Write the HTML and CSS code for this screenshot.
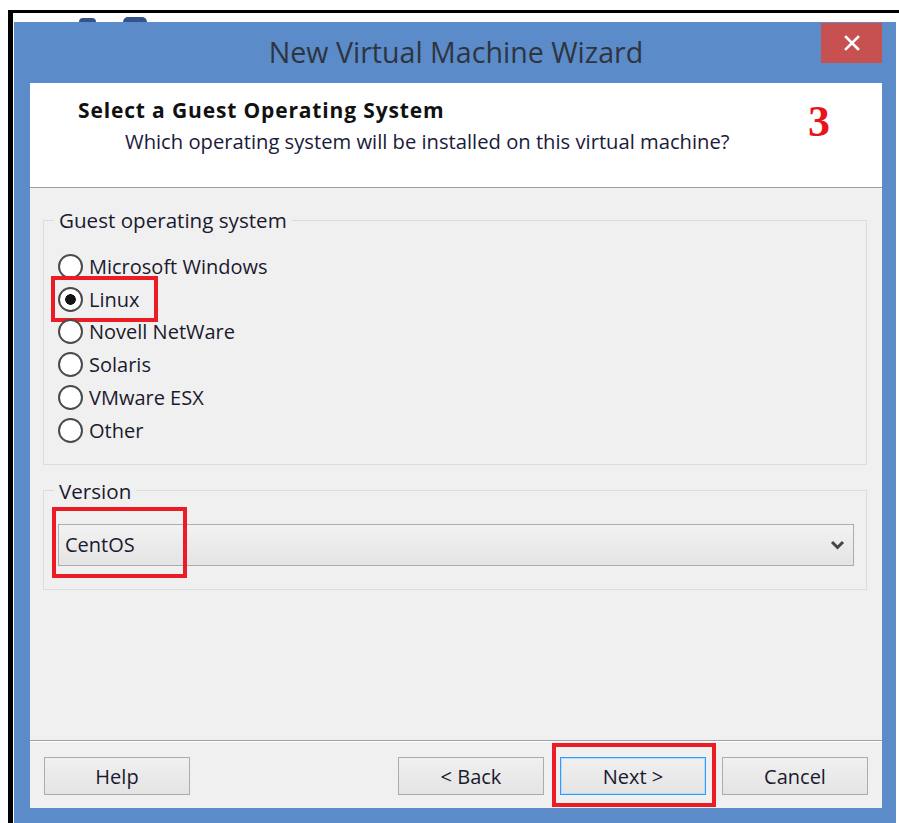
FILE: index.html
```html
<!DOCTYPE html>
<html lang="en">
<head>
<meta charset="utf-8">
<title>New Virtual Machine Wizard</title>
<link rel="stylesheet" href="styles.css">
</head>
<body>
<!-- bits of the desktop icons peeking above the dialog -->
<span class="peek peek-a"></span>
<span class="peek peek-b"></span>

<div class="frame">
  <div class="window">
    <div class="titlebar">
      <span class="title">New Virtual Machine Wizard</span>
      <button class="close" aria-label="Close">
        <svg width="16" height="16" viewBox="0 0 16 16"><path d="M2 2 L14 14 M14 2 L2 14" stroke="#fff" stroke-width="2.6" stroke-linecap="square"/></svg>
      </button>
    </div>

    <div class="client">
      <header class="head">
        <div class="head-text">
          <h1>Select a Guest Operating System</h1>
          <p>Which operating system will be installed on this virtual machine?</p>
        </div>
        <span class="step">3</span>
      </header>

      <main class="pane">
        <fieldset class="group group-os">
          <legend>Guest operating system</legend>
          <label class="radio"><span class="bullet"></span>Microsoft Windows</label>
          <label class="radio radio-on marked"><span class="bullet"></span>Linux</label>
          <label class="radio"><span class="bullet"></span>Novell NetWare</label>
          <label class="radio"><span class="bullet"></span>Solaris</label>
          <label class="radio"><span class="bullet"></span>VMware ESX</label>
          <label class="radio"><span class="bullet"></span>Other</label>
        </fieldset>

        <fieldset class="group group-version">
          <legend>Version</legend>
          <div class="select marked">
            <span class="select-value">CentOS</span>
            <svg class="chevron" width="15" height="12" viewBox="0 0 15 12"><path d="M2 3 L7.5 8.5 L13 3" fill="none" stroke="#444" stroke-width="3"/></svg>
          </div>
        </fieldset>
      </main>

      <footer class="foot">
        <button class="btn">Help</button>
        <span class="spacer"></span>
        <button class="btn btn-back">&lt; Back</button>
        <button class="btn btn-default marked">Next &gt;</button>
        <button class="btn">Cancel</button>
      </footer>
    </div>
  </div>
</div>
</body>
</html>
```

FILE: styles.css
```css
*,
*::before,
*::after {
  box-sizing: border-box;
}

html,
body {
  margin: 0;
}

body {
  position: relative;
  width: 899px;
  height: 823px;
  overflow: hidden;
  background: #fff;
  font-family: "Open Sans", "Noto Sans", sans-serif;
  color: #1a1a2e;
}

/* desktop glyphs partly hidden behind the dialog */
.peek {
  position: absolute;
  background: #34528c;
  border-radius: 12px 12px 0 0;
}

.peek-a {
  left: 79px;
  top: 18px;
  width: 17px;
  height: 4px;
}

.peek-b {
  left: 123px;
  top: 17px;
  width: 24px;
  height: 5px;
}

/* black screenshot edge */
.frame {
  margin: 10px 0 0 8px;
  border-top: 3px solid #000;
  border-left: 5px solid #000;
  padding: 9px 0 0 1px;
}

.window {
  position: relative;
  width: 882px;
  background: #5b8bc9;
  padding: 0 14px 24px 16px;
}

.titlebar {
  height: 61px;
  display: grid;
  grid-template-columns: 1fr auto 1fr;
}

.title {
  grid-column: 2;
  font-size: 28.6px;
  line-height: 60px;
  color: #2e3440;
  white-space: nowrap;
}

.close {
  grid-column: 3;
  justify-self: end;
  align-self: start;
  margin-top: 1px;
  width: 61px;
  height: 40px;
  border: 0;
  padding: 0;
  background: #c75050;
  display: flex;
  align-items: center;
  justify-content: center;
}

.client {
  height: 725px;
  display: flex;
  flex-direction: column;
  background: #f0f0f0;
}

/* white page header */
.head {
  height: 105px;
  flex: none;
  display: flex;
  align-items: flex-start;
  padding: 13px 52px 0 48px;
  background: #fff;
  border-bottom: 1px solid #a0a0a0;
}

.head h1 {
  margin: 0;
  font-size: 21px;
  line-height: 28px;
  letter-spacing: 0.85px;
  font-weight: 700;
  color: #111;
}

.head p {
  margin: 4px 0 0 47px;
  font-size: 20.2px;
  line-height: 26px;
  color: #1a1a3a;
}

.step {
  margin-left: auto;
  margin-top: 4px;
  font-family: "Liberation Serif", "Times New Roman", serif;
  font-weight: 700;
  font-size: 44px;
  line-height: 44px;
  color: #e8141b;
}

.pane {
  flex: 1;
  padding: 19px 15px 0 13px;
}

.group {
  margin: 0;
  min-width: 0;
  border: 1px solid #dcdcdc;
}

.group legend {
  padding: 0 5px;
  font-size: 20.6px;
  line-height: 26px;
}

.group-os {
  padding: 17px 12px 17px 10px;
}

.group-version {
  margin-top: 13px;
  padding: 20px 12px 23px 10px;
}

.radio {
  position: relative;
  width: max-content;
  height: 32.8px;
  display: flex;
  align-items: center;
  gap: 6px;
  margin-left: 4px;
  font-size: 20px;
}

.bullet {
  width: 25px;
  height: 25px;
  border-radius: 50%;
  border: 2px solid #4a4a4a;
  background: #fff;
}

.radio-on .bullet {
  background: radial-gradient(circle, #151515 0 5px, #fff 5.6px);
}

/* red annotation boxes */
.marked {
  position: relative;
}

.marked::after {
  content: "";
  position: absolute;
  border: 4px solid #ec1c24;
  pointer-events: none;
}

.radio.marked::after {
  left: -7px;
  top: -7px;
  width: 107px;
  height: 46px;
}

.select {
  height: 42px;
  margin-left: 4px;
  display: flex;
  align-items: center;
  padding: 0 8px 0 6px;
  border: 1px solid #acacac;
  background: linear-gradient(#f2f2f2, #e4e4e4);
  font-size: 20px;
}

.select-value {
  flex: 1;
}

.select.marked::after {
  left: -7px;
  top: -18px;
  width: 135px;
  height: 71px;
}

.foot {
  height: 68px;
  flex: none;
  display: flex;
  align-items: flex-start;
  padding: 16px 14px 0 14px;
  border-top: 1px solid #a0a0a0;
  box-shadow: inset 0 1px #fff;
}

.spacer {
  flex: 1;
}

.btn {
  width: 146px;
  height: 38px;
  padding: 0;
  border: 1px solid #acacac;
  background: linear-gradient(#f0f0f0, #e4e4e4);
  font-family: inherit;
  font-size: 20px;
  color: #1a1a2e;
}

.btn-back {
  margin-right: 16px;
}

.btn-default {
  margin-right: 16px;
  border-color: #3399ff;
  box-shadow: inset 0 0 0 1px #b9dcfb;
}

.btn.marked::after {
  left: -9px;
  top: -15px;
  width: 164px;
  height: 64px;
}
```
